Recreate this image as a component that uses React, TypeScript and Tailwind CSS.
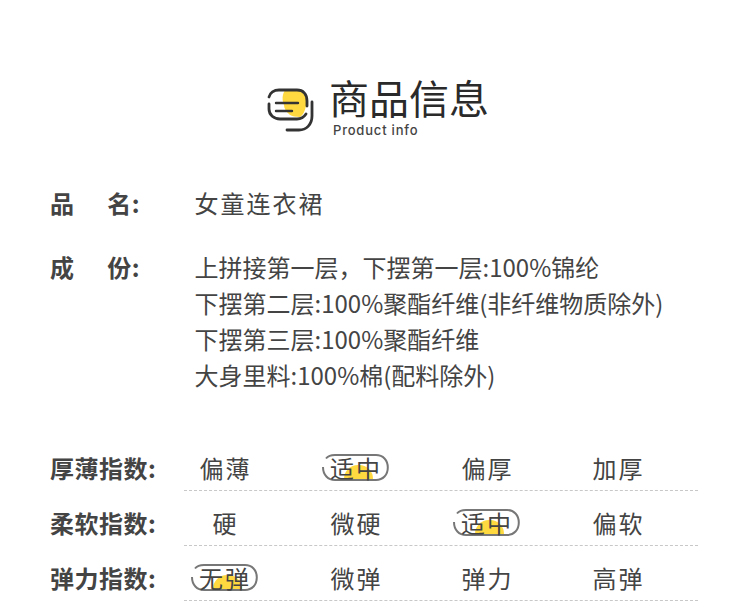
const cjk = "font-['Noto_Sans_CJK_SC','Noto_Sans',sans-serif]";

function TitleIcon() {
  return (
    <svg width="50" height="48" viewBox="0 0 50 48" fill="none" className="shrink-0">
      <path d="M19 4 C27 3 35 4 38 8 C41 12 41 16 40 20 C39 25 37 29 34 31 C30 31 26 30 24 29 C20 26 18 22 18 19 C16 14 16 9 19 4Z" fill="#ffd93f" />
      <path d="M3 11 C4 7 8 4 13 4 H31 C37 4 41 8 41 15 V20" stroke="#333333" strokeWidth="2.8" strokeLinecap="round" />
      <path d="M3 18 V23 C3 29 8 33 14 33 H31 C35 33 38 31 40 28" stroke="#333333" strokeWidth="2.8" strokeLinecap="round" />
      <path d="M10 17 H32 M10 25 H26" stroke="#333333" strokeWidth="2.4" strokeLinecap="round" />
      <path d="M46 16 V30 C46 39 40 44 33 44 H21" stroke="#333333" strokeWidth="2.8" strokeLinecap="round" />
    </svg>
  );
}

function Pill({ children }: { children: string }) {
  return (
    <span className="relative -ml-[1px] inline-flex h-[27px] w-[67px] items-center justify-center">
      <span className="absolute bottom-[2px] left-[22px] h-[14px] w-[29px] rounded-t-full bg-[#ffd93f]" />
      <svg className="absolute inset-0" width="67" height="27" viewBox="0 0 67 27" fill="none">
        <path d="M4 4.5 C6 2 9 1 13 1 H54 C61 1 65.8 6 65.8 13.5 C65.8 21 61 26 54 26 H13 C6 26 1 21 1 13" stroke="#777777" strokeWidth="2" />
      </svg>
      <span className="relative pl-[2px] tracking-[2px]">{children}</span>
    </span>
  );
}

function Row({ label, items, active }: { label: string; items: string[]; active: number }) {
  return (
    <div className="flex h-[55px] pl-[50px] pr-[52px]">
      <div className="w-[134px] shrink-0 pt-[3px] text-[24px] leading-[34px] font-bold tracking-[0.5px] text-[#444444]">{label}</div>
      <div className="grid h-[43px] w-[514px] grid-cols-[repeat(4,131px)] border-b border-dashed border-[#c8c8c8] text-[24px] leading-[34px] text-[#444444]">
        {items.map((t, i) => (
          <div key={t + i} className="-ml-[25px] flex h-[38px] w-[131px] items-center justify-center pt-[1px]">
            {i === active ? <Pill>{t}</Pill> : <span className="pl-[2px] tracking-[2px]">{t}</span>}
          </div>
        ))}
      </div>
    </div>
  );
}

export default function App() {
  return (
    <div className={`h-[606px] w-[750px] overflow-hidden bg-white ${cjk}`}>
      <div className="flex h-[185px] pl-[266px] pt-[74px]">
        <div className="pt-[12px]"><TitleIcon /></div>
        <div className="ml-[13px] flex flex-col">
          <div className="text-[40px] leading-[46px] font-normal text-[#2a2a2a]">商品信息</div>
          <div className="mt-[3px] ml-[4px] font-['Inter',sans-serif] text-[13px] leading-[14px] font-medium tracking-[0.8px] text-[#444444]">Product info</div>
        </div>
      </div>
      <div className="flex pl-[50px]">
        <div className="flex w-[144.5px] justify-between pr-[54.5px] text-[24px] leading-[36px] font-bold tracking-[0.5px] text-[#444444]">
          <span>品</span><span>名:</span>
        </div>
        <div className="text-[24px] leading-[36px] tracking-[2px] text-[#444444]">女童连衣裙</div>
      </div>
      <div className="mt-[28px] flex pl-[50px]">
        <div className="flex h-[36px] w-[144.5px] justify-between pr-[54.5px] text-[24px] leading-[36px] font-bold tracking-[0.5px] text-[#444444]">
          <span>成</span><span>份:</span>
        </div>
        <div className="text-[24px] leading-[36px] text-[#444444]">
          <div>上拼接第一层，下摆第一层:100%锦纶</div>
          <div>下摆第二层:100%聚酯纤维(非纤维物质除外)</div>
          <div>下摆第三层:100%聚酯纤维</div>
          <div>大身里料:100%棉(配料除外)</div>
        </div>
      </div>
      <div className="mt-[55px]">
        <Row label="厚薄指数:" items={["偏薄", "适中", "偏厚", "加厚"]} active={1} />
        <Row label="柔软指数:" items={["硬", "微硬", "适中", "偏软"]} active={2} />
        <Row label="弹力指数:" items={["无弹", "微弹", "弹力", "高弹"]} active={0} />
      </div>
    </div>
  );
}
